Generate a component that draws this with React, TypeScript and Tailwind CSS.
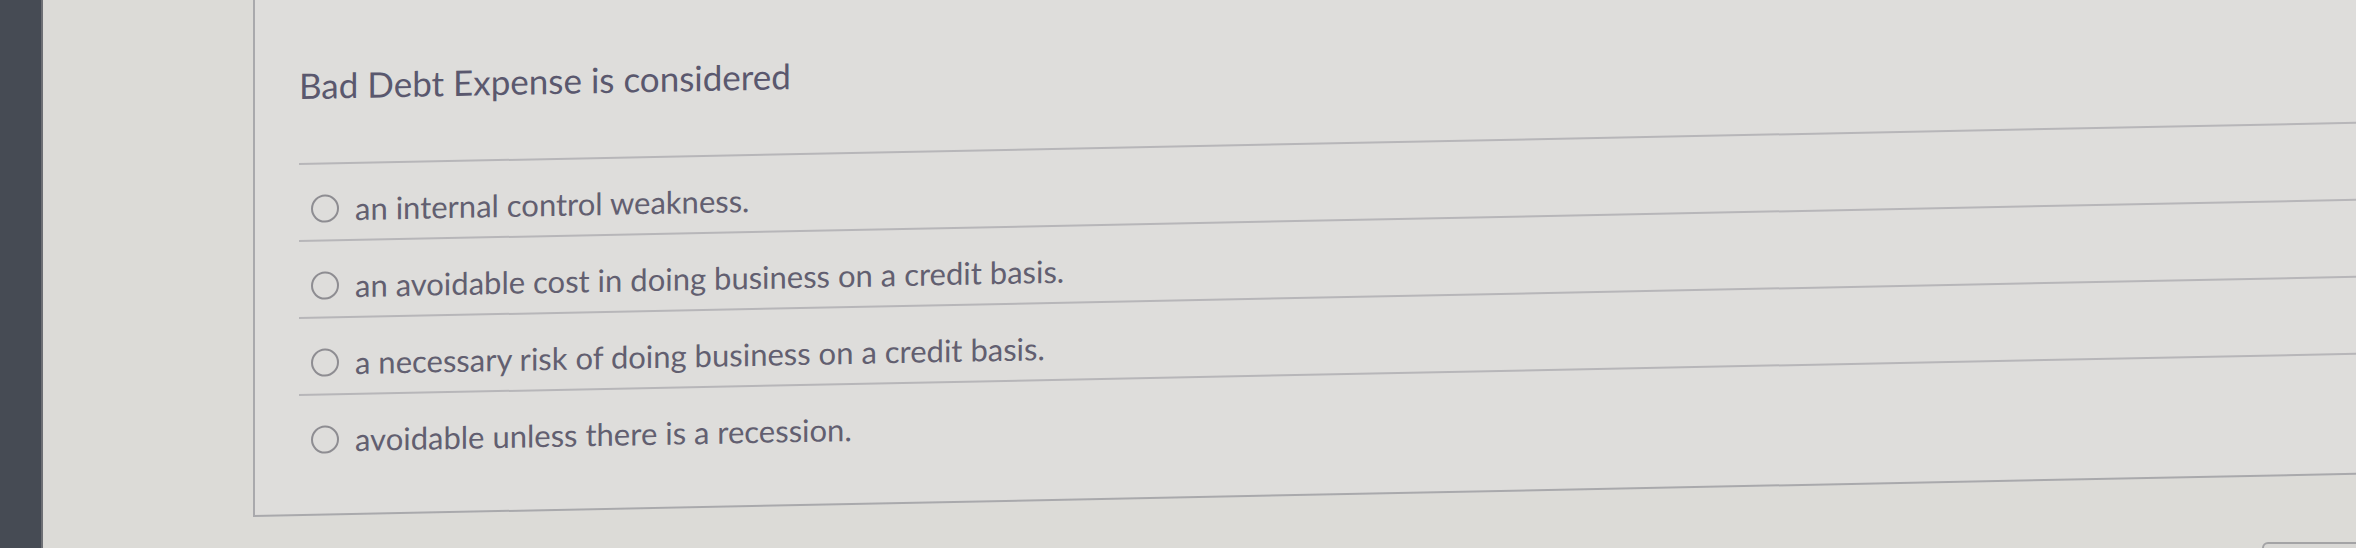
const options = [
  "an internal control weakness.",
  "an avoidable cost in doing business on a credit basis.",
  "a necessary risk of doing business on a credit basis.",
  "avoidable unless there is a recession.",
];

function Radio() {
  return (
    <span className="h-[28px] w-[28px] shrink-0 rounded-full border-2 border-[#8e8d92]" />
  );
}

export default function App() {
  return (
    <div className="flex h-[548px] w-full overflow-hidden bg-[#dcdbd7] font-['Lato','Noto_Sans',sans-serif]">
      <div className="w-[43px] shrink-0 border-r-2 border-[#6d6f74] bg-[#464b54]" />
      <div className="flex min-w-0 flex-1 flex-col pl-[210px]">
        <div className="h-[517px] shrink-0 origin-left skew-y-[-1.15deg] border-b-2 border-l-2 border-[#a9a9ac] bg-[#dedddb]">
          <div className="ml-[44px] flex flex-col">
            <h1 className="pt-[65px] text-[35px] leading-[42px] font-normal whitespace-nowrap text-[#5a586e]">
              Bad Debt Expense is considered
            </h1>
            <div className="mt-[57px] flex flex-col border-t-2 border-[#b7b6b9]">
              {options.map((opt, i) => (
                <label
                  key={opt}
                  className={
                    i < options.length - 1
                      ? "flex h-[77px] items-center gap-[16px] border-b-2 border-[#b7b6b9] pt-[12px] pl-[12px]"
                      : "flex h-[75px] items-center gap-[16px] pt-[12px] pl-[12px]"
                  }
                >
                  <Radio />
                  <span className="text-[31px] leading-[40px] whitespace-nowrap text-[#625f70]">
                    {opt}
                  </span>
                </label>
              ))}
            </div>
          </div>
        </div>
        <div className="flex shrink-0 justify-end pt-[25px]">
          <div className="mr-[-20px] h-[40px] w-[114px] shrink-0 rounded-[6px] border-2 border-[#a3a3a5] bg-[#d9d8d5]" />
        </div>
      </div>
    </div>
  );
}
